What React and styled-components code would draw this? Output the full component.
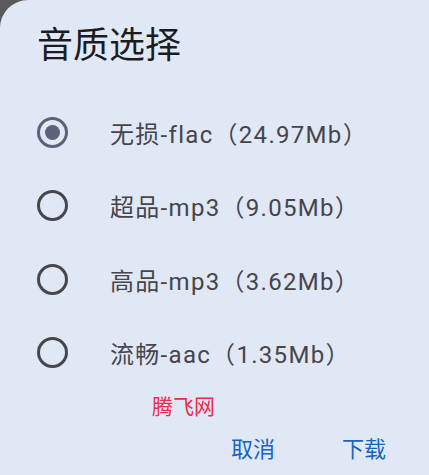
import React, { useState } from 'react'
import styled, { createGlobalStyle } from 'styled-components'

const GlobalStyle = createGlobalStyle`
  html, body {
    margin: 0;
    padding: 0;
    background: #5a5a5a;
  }
  body {
    font-family: Roboto, "Noto Sans CJK SC", sans-serif;
  }
`

const Dialog = styled.div`
  width: 429px;
  height: 475px;
  box-sizing: border-box;
  background-color: #e1e8f5;
  border-top-left-radius: 28px;
  padding-top: 28px;
  display: flex;
  flex-direction: column;
`

const Title = styled.h2`
  margin: 0 0 0 37px;
  font-size: 36px;
  line-height: 36px;
  font-weight: 400;
  color: #1c1b1f;
`

const OptionList = styled.div`
  margin-top: 31.5px;
  display: flex;
  flex-direction: column;
`

const OptionRow = styled.label`
  height: 73.5px;
  display: flex;
  align-items: center;
  padding-left: 37px;
  cursor: pointer;
`

const Radio = styled.span`
  width: 31px;
  height: 31px;
  box-sizing: border-box;
  border-radius: 50%;
  border: 3px solid ${(p) => (p.$checked ? '#5a6378' : '#47464c')};
  display: flex;
  justify-content: center;
  align-items: center;
  flex-shrink: 0;

  &::after {
    content: '';
    width: 15px;
    height: 15px;
    border-radius: 50%;
    background-color: #5a6378;
    display: ${(p) => (p.$checked ? 'block' : 'none')};
  }
`

const OptionText = styled.span`
  margin-left: 42px;
  font-size: 24px;
  letter-spacing: 1.3px;
  color: #45454b;
  white-space: nowrap;
`

const Watermark = styled.div`
  margin: 5px 0 0 152px;
  font-size: 21px;
  line-height: 24px;
  color: #ea2c4c;
`

const Footer = styled.div`
  margin-top: 19px;
  display: flex;
  justify-content: flex-end;
  gap: 67px;
  padding-right: 43px;
`

const TextButton = styled.button`
  border: none;
  background: none;
  padding: 0;
  font-family: inherit;
  font-size: 22px;
  line-height: 24px;
  color: #1764c0;
  cursor: pointer;
`

const options = [
  '无损-flac（24.97Mb）',
  '超品-mp3（9.05Mb）',
  '高品-mp3（3.62Mb）',
  '流畅-aac（1.35Mb）',
]

const App = () => {
  const [selected, setSelected] = useState(0)

  return (
    <>
      <GlobalStyle />
      <Dialog>
        <Title>音质选择</Title>
        <OptionList>
          {options.map((item, index) => (
            <OptionRow key={index} onClick={() => setSelected(index)}>
              <Radio $checked={selected === index} />
              <OptionText>{item}</OptionText>
            </OptionRow>
          ))}
        </OptionList>
        <Watermark>腾飞网</Watermark>
        <Footer>
          <TextButton>取消</TextButton>
          <TextButton>下载</TextButton>
        </Footer>
      </Dialog>
    </>
  )
}

export default App
